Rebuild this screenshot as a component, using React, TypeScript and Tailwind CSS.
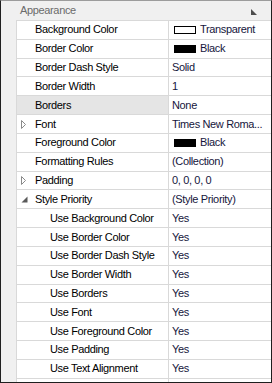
import React from 'react';

type Row = {
  name: string;
  value: string;
  level?: number;
  icon?: 'closed' | 'open';
  swatch?: 'white' | 'black';
  selected?: boolean;
};

const ROWS: Row[] = [
  { name: 'Background Color', value: 'Transparent', swatch: 'white' },
  { name: 'Border Color', value: 'Black', swatch: 'black' },
  { name: 'Border Dash Style', value: 'Solid' },
  { name: 'Border Width', value: '1' },
  { name: 'Borders', value: 'None', selected: true },
  { name: 'Font', value: 'Times New Roma...', icon: 'closed' },
  { name: 'Foreground Color', value: 'Black', swatch: 'black' },
  { name: 'Formatting Rules', value: '(Collection)' },
  { name: 'Padding', value: '0, 0, 0, 0', icon: 'closed' },
  { name: 'Style Priority', value: '(Style Priority)', icon: 'open' },
  { name: 'Use Background Color', value: 'Yes', level: 1 },
  { name: 'Use Border Color', value: 'Yes', level: 1 },
  { name: 'Use Border Dash Style', value: 'Yes', level: 1 },
  { name: 'Use Border Width', value: 'Yes', level: 1 },
  { name: 'Use Borders', value: 'Yes', level: 1 },
  { name: 'Use Font', value: 'Yes', level: 1 },
  { name: 'Use Foreground Color', value: 'Yes', level: 1 },
  { name: 'Use Padding', value: 'Yes', level: 1 },
  { name: 'Use Text Alignment', value: 'Yes', level: 1 },
  { name: '', value: '' },
];

const ExpandIcon = ({ open }: { open: boolean }) =>
  open ? (
    <svg width="7" height="7" viewBox="0 0 7 7" className="block">
      <path d="M6.5 0.5 L6.5 6.5 L0.5 6.5 Z" fill="#595959" />
    </svg>
  ) : (
    <svg width="6" height="9" viewBox="0 0 6 9" className="block">
      <path d="M0.5 0.5 L4.5 4.5 L0.5 8.5 Z" fill="none" stroke="#8a8a8a" strokeWidth="1" />
    </svg>
  );

const PropertyRow = ({ row, first }: { row: Row; first: boolean }) => {
  const indent = row.level ? 'w-[33px]' : 'w-[18px]';
  return (
    <div className={`flex shrink-0 ${first ? 'h-[19.84px]' : 'h-[18.84px]'}`}>
      <div className="w-[15px] shrink-0" />
      <div className={`flex flex-1 min-w-0 border-l border-b border-[#d9d9d9] ${first ? 'border-t' : ''}`}>
        <div
          className={`flex items-center w-[151px] shrink-0 ${row.selected ? 'bg-[#e5e5e5]' : 'bg-white'}`}
        >
          <div className={`${indent} shrink-0 flex items-center pl-[4px]`}>
            {row.icon && <ExpandIcon open={row.icon === 'open'} />}
          </div>
          <span className="text-black whitespace-nowrap">{row.name}</span>
        </div>
        <div className="flex items-center flex-1 min-w-0 overflow-hidden border-l border-[#d9d9d9] bg-white pl-[3px] pr-[2px]">
          {row.swatch && (
            <span
              className={`inline-block w-[22px] h-[8px] ml-[2px] mr-[4px] shrink-0 border border-black ${
                row.swatch === 'black' ? 'bg-black' : 'bg-white'
              }`}
            />
          )}
          <span className="text-[#16163c] whitespace-nowrap">{row.value}</span>
        </div>
      </div>
    </div>
  );
};

export default function App() {
  return (
    <div
      className="w-[272px] h-[383px] box-border overflow-hidden flex flex-col bg-[#f0f0f0] border-l border-r border-b border-[#1f1f1f] border-t border-t-[#9c9c9c] text-[11px] tracking-[-0.35px] leading-none"
      style={{ fontFamily: '"Liberation Sans", Arial, sans-serif' }}
    >
      <div className="h-[19px] shrink-0 flex items-center pl-[19px] pr-[14px]">
        <span className="text-[#6b6b6b]">Appearance</span>
        <svg width="6" height="6" viewBox="0 0 6 6" className="block mt-[2px] ml-auto">
          <path d="M0 0 L6 6 L0 6 Z" fill="#4d4d4d" />
        </svg>
      </div>
      <div className="flex flex-col">
        {ROWS.map((row, i) => (
          <PropertyRow key={i} row={row} first={i === 0} />
        ))}
      </div>
    </div>
  );
}
